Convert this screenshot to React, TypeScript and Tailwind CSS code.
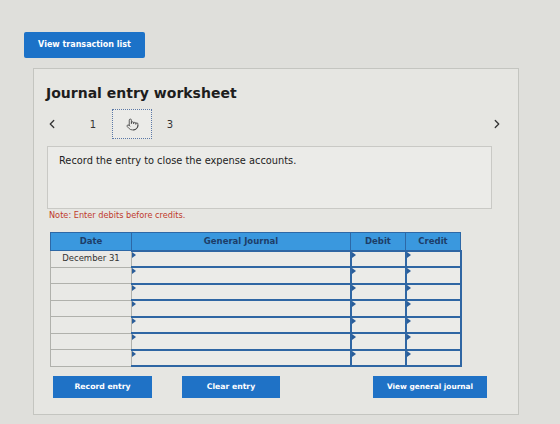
import React from "react";
import { ChevronLeft, ChevronRight, Pointer } from "lucide-react";

const font = { fontFamily: '"DejaVu Sans", Verdana, sans-serif' };

const ROWS = ["December 31", "", "", "", "", "", ""];

function Marker() {
  return (
    <span className="absolute left-0 top-0 h-0 w-0 border-y-[3px] border-l-[4px] border-y-transparent border-l-[#2a5d99]" />
  );
}

function BlueButton({ label, width, size }: { label: string; width: string; size: string }) {
  return (
    <button
      className={`${width} ${size} h-[22px] bg-[#1f72c6] font-bold text-white`}
      style={font}
    >
      {label}
    </button>
  );
}

export default function App() {
  return (
    <div className="h-[424px] w-[560px] overflow-hidden bg-[#dfdfdb]" style={font}>
      <div className="pl-[24px] pt-[30px]">
        <button className="h-[26px] w-[121px] rounded-[2px] bg-[#1c72c8] text-[8px] font-bold text-white">
          View transaction list
        </button>
      </div>

      <div className="ml-[33px] mt-[10px] h-[347px] w-[486px] border border-[#c4c5c0] bg-[#e6e6e2]">
        <h1 className="pl-[12px] pt-[15px] text-[14px] font-bold leading-[18px] text-[#1d1d1d]">
          Journal entry worksheet
        </h1>

        {/* step navigation */}
        <div className="mt-[7px] flex h-[30px] items-center">
          <ChevronLeft className="ml-[11px] text-[#333]" size={14} strokeWidth={2.2} />
          <span className="ml-[27px] w-[14px] text-center text-[10px] text-[#333]">1</span>
          <div className="ml-[12px] flex h-[30px] w-[40px] items-center justify-center border border-dotted border-[#5b78a6] bg-[#ebebe8]">
            <Pointer size={13} strokeWidth={1.6} className="text-[#444]" />
          </div>
          <span className="ml-[11px] w-[14px] text-center text-[10px] text-[#333]">3</span>
          <div className="flex-1" />
          <ChevronRight className="mr-[14px] text-[#333]" size={14} strokeWidth={2.2} />
        </div>

        <div className="ml-[13px] mt-[7px] h-[63px] w-[445px] border border-[#c9c9c5] bg-[#ebebe8] pl-[11px] pt-[7px]">
          <p className="text-[9.8px] leading-[13px] text-[#222]">
            Record the entry to close the expense accounts.
          </p>
        </div>

        <p className="ml-[15px] mt-[1px] text-[8.2px] leading-[11px] text-[#c0392b]">
          Note: Enter debits before credits.
        </p>

        <table className="ml-[16px] mt-[11px] border-collapse text-[8.5px]">
          <thead>
            <tr className="h-[18px] bg-[#3a98de] text-[#1d3d68]">
              <th className="w-[81px] border border-[#2d68a6] font-semibold">Date</th>
              <th className="w-[219px] border border-[#2d68a6] font-semibold">General Journal</th>
              <th className="w-[55px] border border-[#2d68a6] font-semibold">Debit</th>
              <th className="w-[55px] border border-[#2d68a6] font-semibold">Credit</th>
            </tr>
          </thead>
          <tbody>
            {ROWS.map((d, i) => (
              <tr key={i} className="h-[16.5px]">
                <td className="border border-[#b0b1ac] bg-[#e9e9e6] text-center text-[#333]">{d}</td>
                <td className="relative border-2 border-l-[1.5px] border-[#2f66a3] bg-[#ebebe8]">
                  <Marker />
                </td>
                <td className="relative border-2 border-[#2f66a3] bg-[#ebebe8]">
                  <Marker />
                </td>
                <td className="relative border-2 border-[#2f66a3] bg-[#ebebe8]">
                  <Marker />
                </td>
              </tr>
            ))}
          </tbody>
        </table>

        <div className="mt-[5px] flex items-center">
          <div className="ml-[19px]">
            <BlueButton label="Record entry" width="w-[99px]" size="text-[7.7px]" />
          </div>
          <div className="ml-[30px]">
            <BlueButton label="Clear entry" width="w-[98px]" size="text-[7.7px]" />
          </div>
          <div className="ml-[93px]">
            <BlueButton label="View general journal" width="w-[114px]" size="text-[7.4px]" />
          </div>
        </div>
      </div>
    </div>
  );
}
